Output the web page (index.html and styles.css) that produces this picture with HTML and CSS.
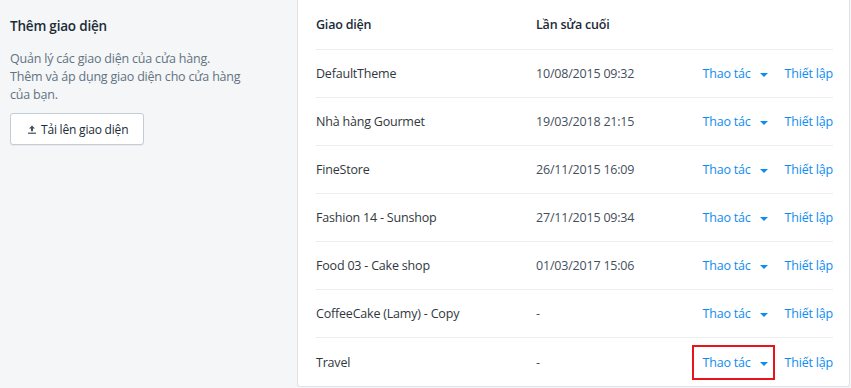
FILE: index.html
```html
<!DOCTYPE html>
<html lang="vi">
  <head>
    <meta charset="UTF-8" />
    <meta name="viewport" content="width=device-width, initial-scale=1.0" />
    <title>Giao diện</title>
    <link rel="stylesheet" href="styles.css">
  </head>
  <body>
    <div class="trang">
      <aside class="mo-ta">
        <h2>Thêm giao diện</h2>
        <p>Quản lý các giao diện của cửa hàng.<br>Thêm và áp dụng giao diện cho cửa hàng của bạn.</p>
        <button class="tai-len">
          <svg width="8" height="9" viewBox="0 0 8 9"><path d="M4 0.5 L7 3.6 H5 V6.2 H3 V3.6 H1 Z" fill="#454f5b"/><rect x="0" y="7.6" width="8" height="1.2" fill="#454f5b"/></svg>
          Tải lên giao diện
        </button>
      </aside>

      <section class="the">
        <div class="hang dau">
          <span>Giao diện</span>
          <span>Lần sửa cuối</span>
          <span></span>
        </div>
        <div class="hang">
          <span class="ten">DefaultTheme</span>
          <span class="ngay">10/08/2015 09:32</span>
          <span class="thao-tac"><a class="menu">Thao tác <i class="caret"></i></a><a>Thiết lập</a></span>
        </div>
        <div class="hang">
          <span class="ten">Nhà hàng Gourmet</span>
          <span class="ngay">19/03/2018 21:15</span>
          <span class="thao-tac"><a class="menu">Thao tác <i class="caret"></i></a><a>Thiết lập</a></span>
        </div>
        <div class="hang">
          <span class="ten">FineStore</span>
          <span class="ngay">26/11/2015 16:09</span>
          <span class="thao-tac"><a class="menu">Thao tác <i class="caret"></i></a><a>Thiết lập</a></span>
        </div>
        <div class="hang">
          <span class="ten">Fashion 14 - Sunshop</span>
          <span class="ngay">27/11/2015 09:34</span>
          <span class="thao-tac"><a class="menu">Thao tác <i class="caret"></i></a><a>Thiết lập</a></span>
        </div>
        <div class="hang">
          <span class="ten">Food 03 - Cake shop</span>
          <span class="ngay">01/03/2017 15:06</span>
          <span class="thao-tac"><a class="menu">Thao tác <i class="caret"></i></a><a>Thiết lập</a></span>
        </div>
        <div class="hang">
          <span class="ten">CoffeeCake (Lamy) - Copy</span>
          <span class="ngay">-</span>
          <span class="thao-tac"><a class="menu">Thao tác <i class="caret"></i></a><a>Thiết lập</a></span>
        </div>
        <div class="hang">
          <span class="ten">Travel</span>
          <span class="ngay">-</span>
          <span class="thao-tac"><a class="menu danh-dau">Thao tác <i class="caret"></i></a><a>Thiết lập</a></span>
        </div>
      </section>
    </div>
  </body>
</html>
```

FILE: styles.css
```css
body {
  margin: 0;
  background-color: #f4f6f8;
  font-family: "Open Sans", "Liberation Sans", sans-serif;
  font-size: 12.5px;
  letter-spacing: -0.2px;
  color: #212b36;
}

.trang {
  display: flex;
  height: 388px;
}

.mo-ta {
  width: 277px;
  padding: 0 10px;
}

.mo-ta h2 {
  font-size: 13.5px;
  font-weight: 600;
  margin: 16px 0 0 0;
  line-height: 20px;
}

.mo-ta p {
  margin: 14px 0 0 0;
  font-size: 12.5px;
  letter-spacing: -0.2px;
  line-height: 18px;
  color: #637381;
  width: 238px;
}

.tai-len {
  margin-top: 9px;
  display: flex;
  align-items: center;
  gap: 5px;
  height: 32px;
  padding: 0 15px 0 17px;
  background-color: #fff;
  border: 1px solid #c4cdd5;
  border-radius: 3px;
  box-shadow: 0 1px 0 rgba(22, 29, 37, 0.05);
  font-family: inherit;
  font-size: 12px;
  letter-spacing: -0.2px;
  color: #212b36;
}

.the {
  width: 517px;
  height: 386px;
  padding: 0 16px 0 18px;
  background-color: #fff;
  border: 1px solid #dfe3e8;
  border-top: none;
  border-radius: 0 0 3px 3px;
}

.hang {
  display: grid;
  grid-template-columns: 220px 1fr auto;
  align-items: center;
  height: 47px;
  border-bottom: 1px solid #ebeef0;
}

.hang:last-child {
  border-bottom: none;
  height: 49px;
}

.dau {
  height: 49px;
  font-weight: 600;
}

.ten {
  color: #31373d;
}

.ngay {
  color: #454f5b;
}

.thao-tac {
  display: flex;
  align-items: center;
  gap: 10px;
  color: #0f8cf0;
}

.thao-tac a {
  cursor: pointer;
}

.menu {
  display: flex;
  align-items: center;
  gap: 9px;
  height: 31px;
  padding: 0 5px 0 9px;
  border: 2px solid transparent;
}

.danh-dau {
  border-color: #e8141b;
}

.caret {
  display: inline-block;
  width: 0;
  height: 0;
  border-left: 4px solid transparent;
  border-right: 4px solid transparent;
  border-top: 4px solid #0f8cf0;
  margin-top: 2px;
}
```
